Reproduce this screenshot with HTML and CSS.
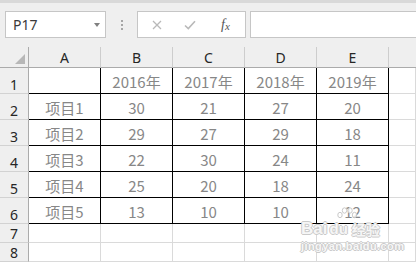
FILE: index.html
```html
<!DOCTYPE html>
<html>
<head>
<meta charset="utf-8">
<link rel="stylesheet" href="styles.css">
</head>
<body>
<div class="app">
  <div class="topstrip"></div>
  <div class="toolbar">
    <div class="namebox"><span class="ref">P17</span><span class="caret"></span></div>
    <div class="grip"><i></i><i></i><i></i></div>
    <div class="fbtns">
      <svg class="ico-x" width="10" height="10" viewBox="0 0 10 10"><path d="M1 1L9 9M9 1L1 9" stroke="#b9b9b9" stroke-width="1.3" fill="none"/></svg>
      <svg class="ico-ok" width="12" height="10" viewBox="0 0 12 10"><path d="M1 5.5L4.3 8.6L11 1.2" stroke="#b9b9b9" stroke-width="1.6" fill="none"/></svg>
      <span class="fx"><i>f</i><i class="sub">x</i></span>
    </div>
    <div class="finput"></div>
  </div>
  <div class="sheet">
    <div class="corner"><span class="tri"></span></div>
    <div class="ch">A</div><div class="ch">B</div><div class="ch">C</div><div class="ch">D</div><div class="ch">E</div><div class="ch last"></div>

    <div class="rh">1</div>
    <div class="c t"></div><div class="c t">2016年</div><div class="c t">2017年</div><div class="c t">2018年</div><div class="c t">2019年</div><div class="c"></div>

    <div class="rh">2</div>
    <div class="c t">项目1</div><div class="c t">30</div><div class="c t">21</div><div class="c t">27</div><div class="c t">20</div><div class="c"></div>

    <div class="rh">3</div>
    <div class="c t">项目2</div><div class="c t">29</div><div class="c t">27</div><div class="c t">29</div><div class="c t">18</div><div class="c"></div>

    <div class="rh">4</div>
    <div class="c t">项目3</div><div class="c t">22</div><div class="c t">30</div><div class="c t">24</div><div class="c t">11</div><div class="c"></div>

    <div class="rh">5</div>
    <div class="c t">项目4</div><div class="c t">25</div><div class="c t">20</div><div class="c t">18</div><div class="c t">24</div><div class="c"></div>

    <div class="rh">6</div>
    <div class="c t">项目5</div><div class="c t">13</div><div class="c t">10</div><div class="c t">10</div><div class="c t">12</div><div class="c"></div>

    <div class="rh">7</div>
    <div class="c"></div><div class="c"></div><div class="c"></div><div class="c"></div><div class="c"></div><div class="c"></div>

    <div class="rh">8</div>
    <div class="c"></div><div class="c"></div><div class="c"></div><div class="c"></div><div class="c"></div><div class="c"></div>
  </div>
  <div class="wm">
    <svg class="paw" width="24" height="14" viewBox="0 0 24 14">
      <g fill="rgba(255,255,255,0.8)" stroke="#c4c4c4" stroke-width="0.9">
        <ellipse cx="5" cy="8" rx="2.2" ry="2.7"/>
        <ellipse cx="9.5" cy="3.5" rx="2.2" ry="2.7"/>
        <ellipse cx="15" cy="3.5" rx="2.2" ry="2.7"/>
        <ellipse cx="19.5" cy="8" rx="2.2" ry="2.7"/>
      </g>
    </svg>
    <div class="wm1"><span>Bai</span><span class="du">du</span><span class="jy">经验</span></div>
    <div class="wm2">jingyan.baidu.com</div>
  </div>
</div>
</body>
</html>
```
FILE: styles.css
```css
html, body {
  margin: 0;
  padding: 0;
  background: #ffffff;
}
.app {
  position: relative;
  width: 416px;
  height: 263px;
  overflow: hidden;
}
.topstrip {
  height: 3px;
  background: #d9d9d9;
}
.toolbar {
  height: 44px;
  box-sizing: border-box;
  padding: 8px 0 0 5px;
  background: #efefef;
  display: flex;
  align-items: flex-start;
}
.namebox {
  width: 101px;
  height: 27px;
  box-sizing: border-box;
  border: 1px solid #c6c6c6;
  background: #ffffff;
  display: flex;
  align-items: center;
  justify-content: space-between;
  padding: 0 5px 0 7px;
}
.ref {
  font-family: "Noto Sans", "Liberation Sans", sans-serif;
  font-size: 14px;
  line-height: 14px;
  color: #3a3a3a;
}
.caret {
  width: 0;
  height: 0;
  border-left: 3.5px solid transparent;
  border-right: 3.5px solid transparent;
  border-top: 4px solid #808080;
}
.grip {
  margin-left: 15px;
  width: 2px;
  height: 27px;
  display: flex;
  flex-direction: column;
  justify-content: center;
  gap: 2px;
}
.grip i {
  display: block;
  width: 2px;
  height: 2px;
  background: #a6a6a6;
}
.fbtns {
  margin-left: 14px;
  width: 109px;
  height: 27px;
  box-sizing: border-box;
  border: 1px solid #c6c6c6;
  background: #ffffff;
  display: flex;
  align-items: center;
  padding-left: 14px;
}
.ico-x {
  display: block;
}
.ico-ok {
  display: block;
  margin-left: 22px;
}
.fx {
  margin-left: 25px;
  font-family: "Liberation Serif", serif;
  font-size: 14px;
  color: #555555;
  line-height: 14px;
}
.fx .sub {
  font-size: 11px;
  position: relative;
  top: 1px;
}
.finput {
  margin-left: 4px;
  flex: 1;
  height: 27px;
  box-sizing: border-box;
  border: 1px solid #c6c6c6;
  border-right: none;
  background: #ffffff;
}
.sheet {
  display: grid;
  grid-template-columns: 29px 72px 72px 72px 72px 72px 1fr;
  grid-template-rows: 21px repeat(6, 26px) 19px 19px;
}
.sheet > div {
  box-sizing: border-box;
  border-right: 1px solid #dadada;
  border-bottom: 1px solid #dadada;
}
.corner {
  background: #efefef;
  border-right-color: #ababab !important;
  border-bottom-color: #ababab !important;
  position: relative;
}
.tri {
  position: absolute;
  right: 3px;
  bottom: 3px;
  width: 0;
  height: 0;
  border-left: 10px solid transparent;
  border-bottom: 10px solid #b7b7b7;
}
.ch {
  background: #efefef;
  border-right-color: #cdcdcd !important;
  border-bottom-color: #ababab !important;
  display: flex;
  align-items: center;
  justify-content: center;
  font-family: "Noto Sans", "Liberation Sans", sans-serif;
  font-size: 14px;
  line-height: 14px;
  color: #262626;
  padding-top: 1px;
}
.ch.last {
  border-right: none;
}
.rh {
  background: #efefef;
  border-right-color: #ababab !important;
  border-bottom-color: #d2d2d2 !important;
  display: flex;
  align-items: flex-end;
  justify-content: center;
  font-family: "Noto Sans", "Liberation Sans", sans-serif;
  font-size: 14px;
  line-height: 14px;
  color: #262626;
  padding-bottom: 1px;
}
.c {
  display: flex;
  align-items: flex-end;
  justify-content: center;
  font-family: "Noto Sans CJK SC", "Noto Sans", sans-serif;
  font-size: 15px;
  line-height: 15px;
  color: #878787;
  padding-bottom: 4px;
}
.c.t {
  border-right-color: #000000;
  border-bottom-color: #000000;
}
.wm {
  position: absolute;
  left: 301px;
  top: 207px;
  width: 92px;
  font-family: "Liberation Sans", sans-serif;
  color: rgba(255, 255, 255, 0.85);
  text-shadow: 1px 0 0 #cacaca, -1px 0 0 #cacaca, 0 1px 0 #cacaca, 0 -1px 0 #cacaca;
}
.paw {
  display: block;
  margin-left: 34px;
}
.wm1 {
  display: flex;
  align-items: center;
  font-size: 17px;
  font-weight: bold;
  line-height: 16px;
  margin-top: 0;
}
.wm1 .du {
  margin-left: 2px;
  font-size: 15px;
}
.wm1 .jy {
  margin-left: 4px;
  font-family: "Noto Sans CJK SC", sans-serif;
  font-size: 14px;
}
.wm2 {
  margin-top: 4px;
  font-size: 11px;
  line-height: 11px;
  font-weight: bold;
  letter-spacing: 0.4px;
}
```
